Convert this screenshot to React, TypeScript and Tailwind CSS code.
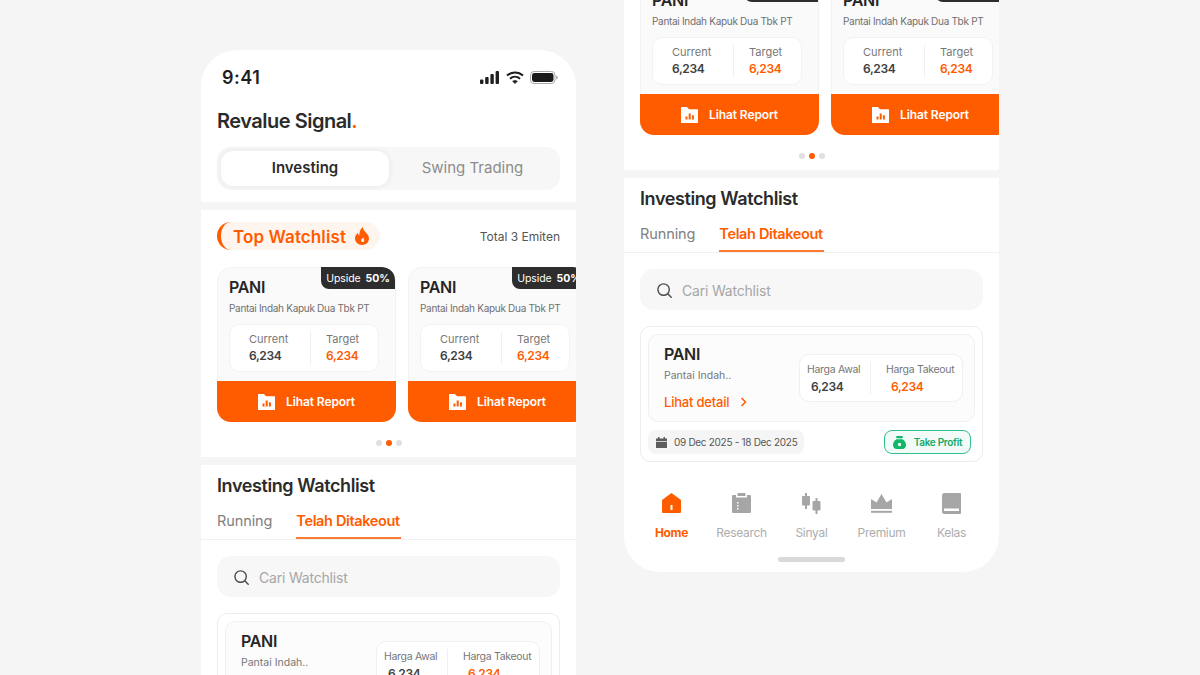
const orange = "#ff5c00";

const SignalIcon = () => (
  <svg width="20" height="13" viewBox="0 0 20 13" fill="#1f1f1f">
    <rect x="0" y="8.5" width="3.4" height="4.5" rx="1" />
    <rect x="5.2" y="6" width="3.4" height="7" rx="1" />
    <rect x="10.4" y="3" width="3.4" height="10" rx="1" />
    <rect x="15.6" y="0" width="3.4" height="13" rx="1" />
  </svg>
);

const WifiIcon = () => (
  <svg width="18" height="13" viewBox="0 0 18 13" fill="none" stroke="#1f1f1f" strokeWidth="2.1">
    <path d="M1 4.6C5.5.4 12.5.4 17 4.6" />
    <path d="M4 7.7c2.9-2.6 7.1-2.6 10 0" />
    <path d="M9 12.6 6.6 10.3c1.4-1.2 3.4-1.2 4.8 0Z" fill="#1f1f1f" strokeWidth="0.6" />
  </svg>
);

const BatteryIcon = () => (
  <svg width="28" height="13" viewBox="0 0 28 13" fill="none">
    <rect x="0.5" y="0.5" width="24.5" height="12" rx="3.6" stroke="#a8a8a8" />
    <rect x="2" y="2" width="21.5" height="9" rx="2.4" fill="#1a1a1a" />
    <path d="M26.2 4.4c1 .4 1.6 1.1 1.6 2.1s-.6 1.7-1.6 2.1Z" fill="#a8a8a8" />
  </svg>
);

const FlameIcon = () => (
  <svg width="14" height="18" viewBox="0 0 14 18" className="shrink-0">
    <path
      fill={orange}
      d="M7.8 0c.4 2.600 1.500 3.900 3 5.600C12.400 7.400 14 9.200 14 11.500 14 15.200 10.900 18 7 18s-7-2.800-7-6.400c0-2.400 1.300-4.200 2.800-5.500.2 1.200.7 2 1.500 2.500C4.200 5.300 5.200 2 7.800 0Z"
    />
    <path fill="#fff5ef" d="M8.200 10.400c-.8 1-2.200 1.700-2.200 3.100 0 .9.700 1.500 1.600 1.500s1.700-.7 1.700-1.800c0-1-.7-1.800-1.100-2.800Z" />
  </svg>
);

const FolderChartIcon = () => (
  <svg width="17" height="16" viewBox="0 0 17 16" className="shrink-0">
    <path d="M0 .6C0 .3.3 0 .6 0h5.300l2.100 2.200h8.400c.3 0 .6.300.6.600v12.600c0 .3-.3.600-.6.600H.6c-.3 0-.6-.3-.6-.6Z" fill="#fff" />
    <rect x="4.500" y="9.500" width="2" height="3" fill={orange} />
    <rect x="7.700" y="6.500" width="2" height="6" fill={orange} />
    <rect x="10.900" y="8.300" width="2" height="4.200" fill={orange} />
  </svg>
);

const SearchIcon = () => (
  <svg width="15" height="15" viewBox="0 0 15 15" fill="none" stroke="#4a4a4a" strokeWidth="1.400" strokeLinecap="round">
    <circle cx="6.600" cy="6.600" r="5.700" />
    <path d="m11 11 3.200 3.200" />
  </svg>
);

const ChevronIcon = () => (
  <svg width="7" height="10" viewBox="0 0 7 10" fill="none" stroke={orange} strokeWidth="1.500">
    <path d="m1.500 1 4 4-4 4" />
  </svg>
);

const CalendarIcon = () => (
  <svg width="11" height="11" viewBox="0 0 11 11" fill="#5c5c5c" className="shrink-0">
    <rect x="2" y="0" width="1.500" height="2.500" />
    <rect x="7.500" y="0" width="1.500" height="2.500" />
    <path d="M0 1.500h11V4H0ZM0 4.800h11V10.400a.6.6 0 0 1-.6.600H.6a.6.6 0 0 1-.6-.600Z" />
  </svg>
);

const MoneyBagIcon = () => (
  <svg width="13" height="13" viewBox="0 0 13 13" fill="#12b76a" className="shrink-0">
    <rect x="3.300" y="0" width="6.400" height="2.200" rx="0.500" />
    <path fillRule="evenodd" d="M3.500 3.300h6C11.700 4.500 13 6.700 13 9.100 13 11.500 11.500 13 9.500 13h-6C1.500 13 0 11.500 0 9.100 0 6.700 1.300 4.500 3.500 3.300ZM6.500 6.800a1.700 1.700 0 1 0 0 3.400 1.700 1.700 0 0 0 0-3.400Z" />
  </svg>
);

const HomeIcon = () => (
  <svg width="19" height="20" viewBox="0 0 19 20" fill={orange}>
    <path
      fillRule="evenodd"
      d="M9.500 0 19 7v12a1 1 0 0 1-1 1H1a1 1 0 0 1-1-1V7ZM8.500 12v5h2v-5Z"
    />
  </svg>
);

const ResearchIcon = () => (
  <svg width="19" height="20" viewBox="0 0 19 20" fill="#a6a6a6">
    <path
      fillRule="evenodd"
      d="M1 2h3v2.500h11V2h3a1 1 0 0 1 1 1v16a1 1 0 0 1-1 1H1a1 1 0 0 1-1-1V3a1 1 0 0 1 1-1ZM5 9v1.500h1.500V9Zm0 3v1.500h1.500V12Zm0 3v1.500h1.500V15Z"
    />
    <rect x="5.500" y="0" width="8" height="3" rx="0.500" />
  </svg>
);

const SinyalIcon = () => (
  <svg width="19" height="21" viewBox="0 0 19 21" fill="#a6a6a6">
    <rect x="3" y="0" width="2" height="16" />
    <rect x="0" y="3" width="8" height="9.500" rx="1" />
    <rect x="13.500" y="5" width="2" height="16" />
    <rect x="10.500" y="8" width="8" height="9.500" rx="1" />
  </svg>
);

const CrownIcon = () => (
  <svg width="21" height="19" viewBox="0 0 21 19" fill="#a6a6a6">
    <path d="M0 5 5.500 8.500 10.500 0l5 8.500L21 5v10H0Z" />
    <rect x="0" y="16.800" width="21" height="2" />
  </svg>
);

const BookIcon = () => (
  <svg width="19" height="21" viewBox="0 0 19 21">
    <path d="M2.500 0H18a1 1 0 0 1 1 1v19a1 1 0 0 1-1 1H2.500A2.500 2.500 0 0 1 0 18.500v-16A2.500 2.500 0 0 1 2.500 0Z" fill="#a6a6a6" />
    <rect x="2" y="15.500" width="15" height="2.500" fill="#fff" />
  </svg>
);

const ReportCard = () => (
  <div className="relative w-[179px] shrink-0 rounded-[14px] overflow-hidden flex flex-col h-[155px]">
    <div className="absolute right-[1px] top-0 w-[74px] h-[22px] pt-[1px] bg-[#2d2d2d] rounded-bl-[8px] rounded-tr-[13px] flex items-center justify-center gap-[5px] text-[10.500px] tracking-[-0.1px] text-white whitespace-nowrap">
      <span>Upside</span>
      <span className="font-bold">50%</span>
    </div>
    <div className="px-[11px] pt-[9px] h-[114px] rounded-t-[14px] border-x border-t border-[#f2f2f2] bg-[#fafafa]">
      <div className="text-[16px] leading-[20px] font-semibold text-[#262626] tracking-[-0.3px]">PANI</div>
      <div className="text-[10px] leading-[14px] mt-[4px] text-[#707070] tracking-[-0.3px] whitespace-nowrap">Pantai Indah Kapuk Dua Tbk PT</div>
      <div className="mt-[9px] h-[48px] w-[150px] rounded-[10px] bg-white border border-[#f2f2f2] flex items-center">
        <div className="w-[81px] pl-[19px] border-r border-[#efefef] h-[32px]">
          <div className="text-[11px] leading-[14px] text-[#777]">Current</div>
          <div className="text-[12px] leading-[16px] mt-[2px] font-semibold text-[#404040] tracking-[-0.4px]">6,234</div>
        </div>
        <div className="pl-[15px] h-[32px]">
          <div className="text-[11px] leading-[14px] text-[#777]">Target</div>
          <div className="text-[12px] leading-[16px] mt-[2px] font-semibold text-[#ff5c00] tracking-[-0.4px]">6,234</div>
        </div>
      </div>
    </div>
    <div className="h-[41px] bg-[#ff5c00] flex items-center justify-center gap-[11px] text-white text-[12px] font-semibold tracking-[-0.1px]">
      <FolderChartIcon />
      <span>Lihat Report</span>
    </div>
  </div>
);

const navItems = [
  { label: "Home", icon: <HomeIcon />, active: true },
  { label: "Research", icon: <ResearchIcon />, active: false },
  { label: "Sinyal", icon: <SinyalIcon />, active: false },
  { label: "Premium", icon: <CrownIcon />, active: false },
  { label: "Kelas", icon: <BookIcon />, active: false },
];

const Phone = ({ className }: { className: string }) => (
  <div className={`w-[375px] h-[809px] shrink-0 rounded-[36px] overflow-hidden flex flex-col gap-[8px] ${className}`}>
    <div className="h-[152px] bg-white px-[16px]">
      <div className="h-[54px] pr-[2px] pl-[5px] flex items-center justify-between">
        <span className="text-[18px] font-semibold text-[#1f1f1f] tracking-[0.5px]">9:41</span>
        <div className="flex items-center gap-[6px]">
          <SignalIcon />
          <WifiIcon />
          <BatteryIcon />
        </div>
      </div>
      <div className="mt-[3px] text-[20px] leading-[28px] font-semibold text-[#2b2b2b] tracking-[-0.5px]">
        Revalue Signal<span className="text-[#ff5c00]">.</span>
      </div>
      <div className="mt-[12px] h-[43px] rounded-[14px] bg-[#f7f7f7] p-[4px] flex">
        <div className="w-[168px] rounded-[12px] bg-white shadow-[0_0_6px_rgba(0,0,0,0.08)] flex items-center justify-center text-[15px] font-semibold text-[#2b2b2b]">Investing</div>
        <div className="flex-1 flex items-center justify-center text-[15px] text-[#8c8c8c]">Swing Trading</div>
      </div>
    </div>

    <div className="h-[247px] bg-white pt-[12px] pl-[16px]">
      <div className="pr-[16px] flex items-center justify-between">
        <div className="w-[163px] h-[28px] rounded-full bg-[#fff5ef] border-l-[4px] border-[#ff5c00] pl-[12px] flex items-center gap-[9px] text-[17px] font-semibold text-[#ff5c00] tracking-[0.1px]">
          <span className="whitespace-nowrap mt-[3px]">Top Watchlist</span>
          <FlameIcon />
        </div>
        <span className="text-[12px] text-[#555] mt-[1px]">Total 3 Emiten</span>
      </div>
      <div className="mt-[17px] flex gap-[12px] overflow-hidden">
        <ReportCard />
        <ReportCard />
      </div>
      <div className="mt-[18px] pr-[16px] flex justify-center gap-[4px]">
        <span className="w-[6px] h-[6px] rounded-full bg-[#e0e0e0]" />
        <span className="w-[6px] h-[6px] rounded-full bg-[#ff5c00]" />
        <span className="w-[6px] h-[6px] rounded-full bg-[#e0e0e0]" />
      </div>
    </div>

    <div className="flex-1 bg-white">
      <div className="px-[16px] pt-[9px] text-[18px] leading-[24px] font-semibold text-[#2b2b2b] tracking-[-0.4px]">Investing Watchlist</div>
      <div className="mt-[10px] h-[32px] px-[16px] border-b border-[#f0f0f0] flex gap-[24px] text-[14.500px]">
        <span className="text-[#808080] leading-[25px] tracking-[-0.1px]">Running</span>
        <span className="h-[31px] border-b-2 border-[#ff7a33] text-[#ff5c00] font-semibold leading-[25px] w-[105px] whitespace-nowrap tracking-[-0.35px]">Telah Ditakeout</span>
      </div>
      <div className="mx-[16px] mt-[16px] h-[41px] pt-[1px] rounded-[14px] bg-[#f7f7f7] pl-[17px] flex items-center gap-[10px] text-[14px] text-[#a6a6a6] tracking-[-0.2px]">
        <SearchIcon />
        <span>Cari Watchlist</span>
      </div>
      <div className="mx-[16px] mt-[16px] h-[136px] rounded-[10px] border border-[#ececec] p-[7px]">
        <div className="h-[88px] rounded-[10px] border border-[#f0f0f0] bg-[#fcfcfc] pl-[15px] pr-[11px] flex items-center justify-between">
          <div className="mb-[2px]">
            <div className="text-[16px] leading-[20px] font-semibold text-[#262626] tracking-[-0.3px]">PANI</div>
            <div className="mt-[5px] text-[10.500px] leading-[14px] text-[#777]">Pantai Indah..</div>
            <div className="mt-[11px] flex items-center gap-[11px] text-[13px] leading-[16px] font-medium text-[#ff5c00] tracking-[-0.2px]">
              <span>Lihat detail</span>
              <ChevronIcon />
            </div>
          </div>
          <div className="w-[164px] h-[48px] rounded-[10px] border border-[#f0f0f0] bg-white flex items-center">
            <div className="w-[71px] h-[32px] pl-[7px] border-r border-[#f0f0f0]">
              <div className="mt-[1px] text-[10.500px] leading-[14px] text-[#777] whitespace-nowrap tracking-[-0.3px]">Harga Awal</div>
              <div className="pl-[4px] mt-[2px] text-[12px] leading-[16px] font-semibold text-[#404040] tracking-[-0.4px]">6,234</div>
            </div>
            <div className="h-[32px] pl-[15px]">
              <div className="mt-[1px] text-[10.500px] leading-[14px] text-[#777] whitespace-nowrap tracking-[-0.3px]">Harga Takeout</div>
              <div className="pl-[5px] mt-[2px] text-[12px] leading-[16px] font-semibold text-[#ff5c00] tracking-[-0.4px]">6,234</div>
            </div>
          </div>
        </div>
        <div className="mt-[8px] pr-[4px] flex items-center justify-between">
          <div className="w-[156px] h-[24px] rounded-[8px] bg-[#f5f5f5] pl-[8px] flex items-center gap-[7px] text-[10px] tracking-[-0.3px] text-[#555] whitespace-nowrap">
            <CalendarIcon />
            <span>09 Dec 2025 - 18 Dec 2025</span>
          </div>
          <div className="w-[87px] h-[24px] rounded-[8px] border border-[#2fc08c] bg-[#f3fbf8] flex items-center justify-center gap-[8px] text-[10px] font-semibold text-[#12a867] tracking-[-0.3px] whitespace-nowrap">
            <MoneyBagIcon />
            <span>Take Profit</span>
          </div>
        </div>
      </div>
      <div className="mt-[30px] px-[12.500px] flex">
        {navItems.map((item) => (
          <div key={item.label} className="w-[70px] flex flex-col items-center">
            <div className="h-[22px] flex items-center justify-center">{item.icon}</div>
            <div className={`mt-[11px] text-[12px] leading-[16px] tracking-[-0.3px] ${item.active ? "font-bold text-[#ff5c00]" : "text-[#adadad]"}`}>{item.label}</div>
          </div>
        ))}
      </div>
      <div className="mt-[16px] mx-auto w-[67px] h-[5px] rounded-full bg-[#d9d9d9]" />
    </div>
  </div>
);

export default function App() {
  return (
    <div className="w-[1200px] h-[675px] overflow-hidden bg-[#f5f5f5] pl-[201px] flex items-start gap-[48px] font-['Inter',sans-serif]">
      <Phone className="mt-[50px]" />
      <Phone className="mt-[-237px]" />
    </div>
  );
}
